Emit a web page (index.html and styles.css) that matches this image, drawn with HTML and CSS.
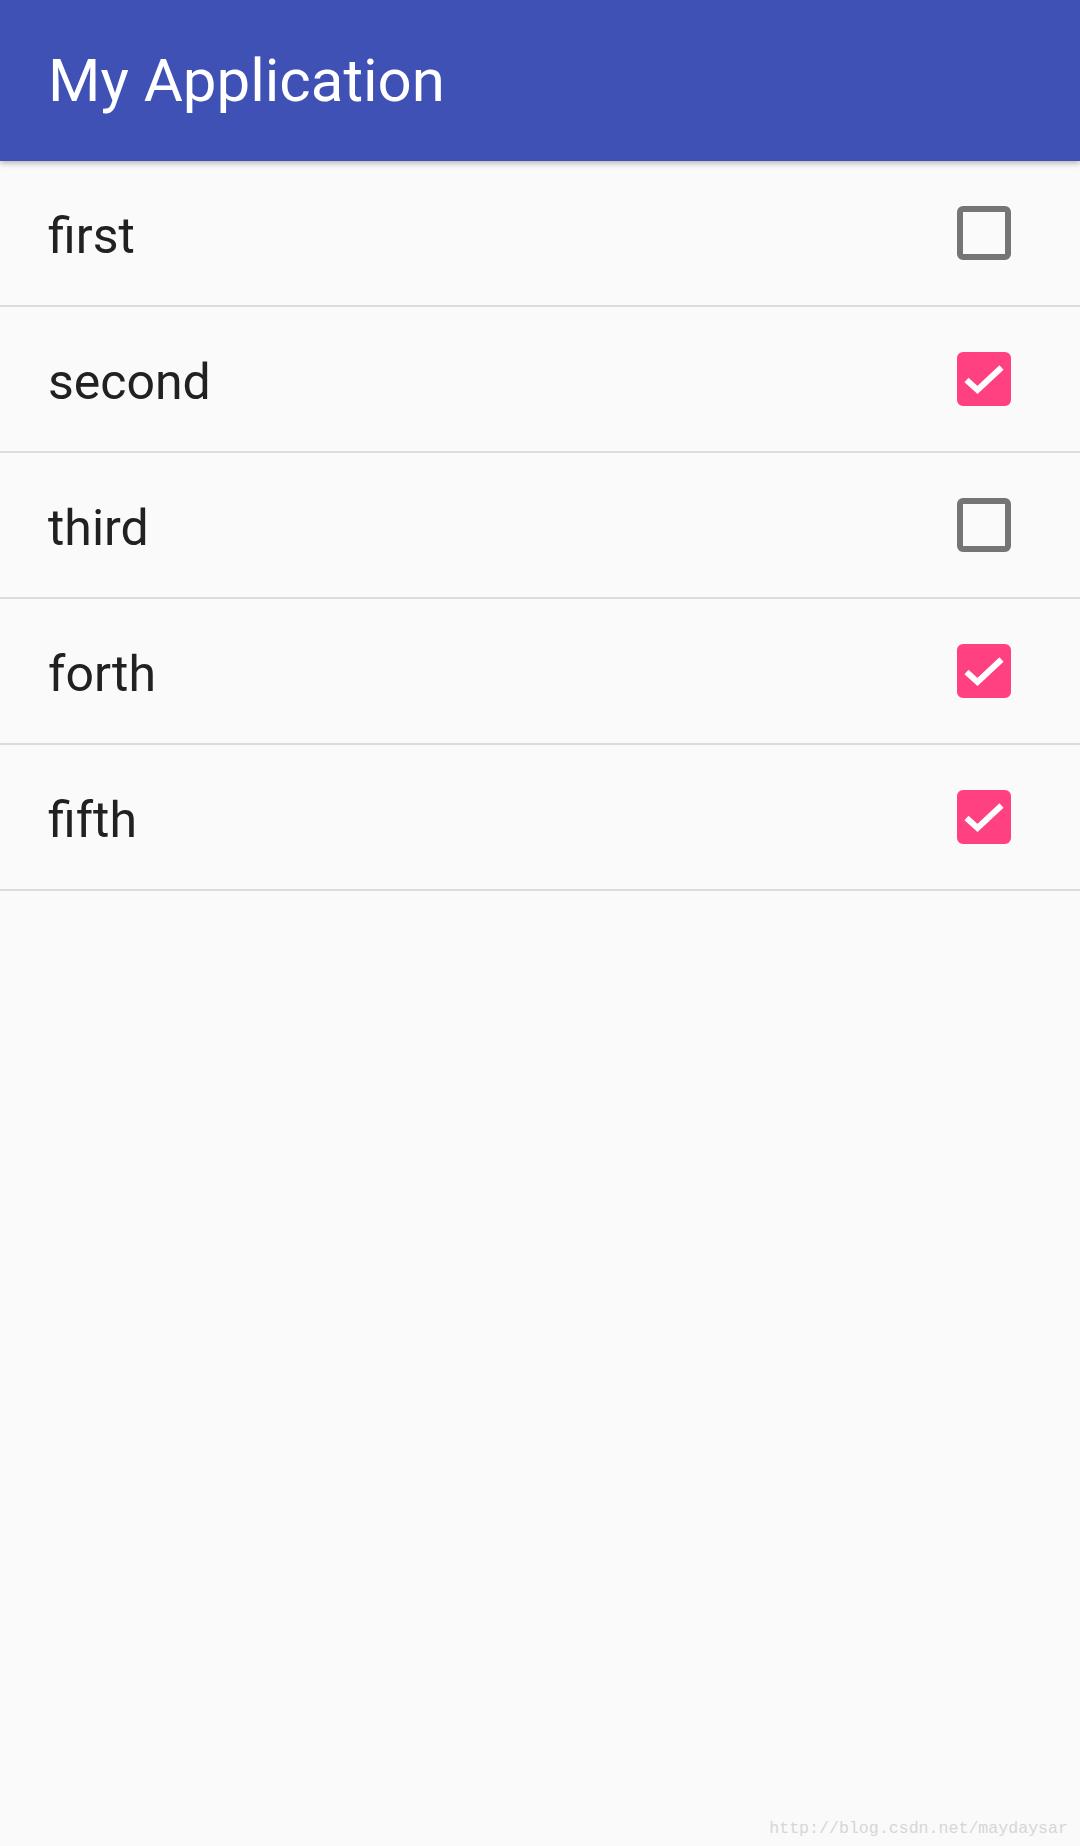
FILE: index.html
```html
<!DOCTYPE html>
<html lang="en">
<head>
  <meta charset="UTF-8">
  <meta name="viewport" content="width=device-width, initial-scale=1.0">
  <title>My Application</title>
  <link rel="stylesheet" href="styles.css">
</head>
<body>
  <header class="toolbar">
    <h1>My Application</h1>
  </header>
  <ul class="list">
    <li class="row">
      <span class="label">first</span>
      <span class="box"></span>
    </li>
    <li class="row">
      <span class="label">second</span>
      <span class="box checked">
        <svg viewBox="0 0 54 54" width="54" height="54"><path d="M9.5 28 L20.5 38 L44.5 15.5" /></svg>
      </span>
    </li>
    <li class="row">
      <span class="label">third</span>
      <span class="box"></span>
    </li>
    <li class="row">
      <span class="label">forth</span>
      <span class="box checked">
        <svg viewBox="0 0 54 54" width="54" height="54"><path d="M9.5 28 L20.5 38 L44.5 15.5" /></svg>
      </span>
    </li>
    <li class="row">
      <span class="label">fifth</span>
      <span class="box checked">
        <svg viewBox="0 0 54 54" width="54" height="54"><path d="M9.5 28 L20.5 38 L44.5 15.5" /></svg>
      </span>
    </li>
  </ul>
  <div class="watermark">http://blog.csdn.net/maydaysar</div>
</body>
</html>
```

FILE: styles.css
```css
body {
  font-family: 'Roboto', 'Noto Sans', sans-serif;
  background-color: #fafafa;
  margin: 0;
  height: 1846px;
  position: relative;
  overflow: hidden;
}

.toolbar {
  background-color: #3f51b5;
  height: 161px;
  display: flex;
  align-items: center;
  padding-left: 48px;
  box-shadow: 0 2px 6px rgba(0, 0, 0, 0.3);
  position: relative;
  z-index: 1;
}

.toolbar h1 {
  margin: 0;
  font-size: 60px;
  font-weight: 400;
  color: #ffffff;
}

.list {
  list-style: none;
  margin: 0;
  padding: 0;
}

.row {
  height: 144px;
  display: flex;
  align-items: center;
  justify-content: space-between;
  padding: 0 69px 0 48px;
  border-bottom: 2px solid #dcdcdc;
}

.label {
  font-size: 50px;
  color: #212121;
  padding-top: 5px;
}

.box {
  width: 54px;
  height: 54px;
  box-sizing: border-box;
  border: 6px solid #757575;
  border-radius: 6px;
  position: relative;
}

.box.checked {
  background-color: #ff4081;
  border-color: #ff4081;
}

.box svg {
  position: absolute;
  left: -6px;
  top: -6px;
}

.box path {
  fill: none;
  stroke: #ffffff;
  stroke-width: 6;
}

.watermark {
  position: absolute;
  right: 12px;
  bottom: 8px;
  font-family: 'Liberation Mono', monospace;
  font-size: 16.6px;
  color: #d6d6d6;
}
```
